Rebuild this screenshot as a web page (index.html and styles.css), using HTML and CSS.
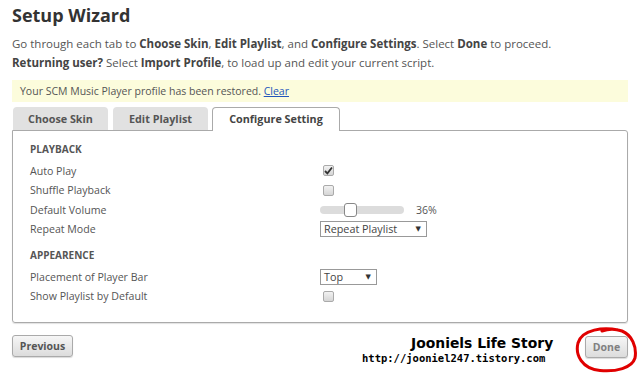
FILE: index.html
```html
<!DOCTYPE html>
<html>
<head>
<meta charset="utf-8">
<link rel="stylesheet" href="styles.css">
</head>
<body>
<div class="wizard">
  <h1 class="title">Setup Wizard</h1>
  <p class="intro">Go through each tab to <b>Choose Skin</b>, <b>Edit Playlist</b>, and <b>Configure Settings</b>. Select <b>Done</b> to proceed.<br><b>Returning user?</b> Select <b>Import Profile</b>, to load up and edit your current script.</p>
  <div class="notice">Your SCM Music Player profile has been restored. <a class="link" href="#">Clear</a></div>
  <div class="tabs">
    <div class="tab t1">Choose Skin</div>
    <div class="tab t2">Edit Playlist</div>
    <div class="tab active">Configure Setting</div>
  </div>
  <div class="panel">
    <div class="heading">PLAYBACK</div>
    <div class="row"><span class="label">Auto Play</span><span class="ctrl"><span class="check"><svg width="9" height="9" viewBox="0 0 9 9"><path d="M1 5 L3.4 7.4 L8 1.5" fill="none" stroke="#333" stroke-width="1.8"/></svg></span></span></div>
    <div class="row"><span class="label">Shuffle Playback</span><span class="ctrl"><span class="check"></span></span></div>
    <div class="row"><span class="label">Default Volume</span><span class="ctrl"><span class="slider"><span class="track"></span><span class="handle"></span></span><span class="pct">36%</span></span></div>
    <div class="row"><span class="label">Repeat Mode</span><span class="ctrl"><span class="select wide">Repeat Playlist<span class="arrow">▼</span></span></span></div>
    <div class="heading second">APPEARENCE</div>
    <div class="row"><span class="label">Placement of Player Bar</span><span class="ctrl"><span class="select narrow">Top<span class="arrow">▼</span></span></span></div>
    <div class="row"><span class="label">Show Playlist by Default</span><span class="ctrl"><span class="check"></span></span></div>
  </div>
  <div class="footer">
    <button class="btn">Previous</button>
    <button class="btn done">Done</button>
  </div>
</div>
<div class="wm1">Jooniels Life Story</div>
<div class="wm2">http://jooniel247.tistory.com</div>
<svg class="circle" width="66" height="50" viewBox="0 0 66 50"><path d="M44 5 C30 2 8 4 4 18 C1 30 8 44 26 45.5 C42 47 58 43 61 33 C63 22 58 10 48 6 C42 4 34 4 28 6" fill="none" stroke="#e00000" stroke-width="3" stroke-linecap="round"/></svg>
</body>
</html>
```
FILE: styles.css
```css
html, body { margin: 0; padding: 0; background: #fff; }
body { font-family: "Open Sans", "DejaVu Sans", sans-serif; color: #555; width: 640px; height: 375px; overflow: hidden; position: relative; }
.wizard { padding: 0 12px 0 12px; }
.title { margin: 0; font-size: 18px; line-height: 30px; font-weight: 700; color: #333; }
.intro { margin: 4px 0 0 0; font-size: 11.5px; line-height: 19px; color: #555; }
.intro b { color: #444; }
.notice { margin-top: 8px; height: 22px; line-height: 22px; background: #fcfcdc; padding-left: 8px; font-size: 10.5px; color: #555; }
.link { color: #2255bb; text-decoration: underline; }
.tabs { display: flex; margin-top: 5px; padding-left: 1px; height: 23px; position: relative; z-index: 1; }
.tab { height: 23px; line-height: 23px; box-sizing: border-box; background: #e1e1e1; border-radius: 4px 4px 0 0; font-size: 10.8px; font-weight: 700; color: #555; text-align: center; }
.t1 { width: 95px; margin-right: 5px; }
.t2 { width: 95px; margin-right: 4px; }
.tab.active { width: 128px; background: #fff; border: 1px solid #aaa; border-bottom: none; height: 24px; line-height: 22px; color: #444; }
.panel { border: 1px solid #aaa; border-radius: 0 3px 3px 3px; padding: 9px 0 16px 17px; box-shadow: 0 1px 1px rgba(0,0,0,0.12); }
.heading { font-size: 10px; font-weight: 700; line-height: 18px; color: #555; margin-bottom: 3px; }
.heading.second { margin-top: 7px; }
.row { display: grid; grid-template-columns: 291px auto; height: 19.5px; align-items: center; font-size: 10.6px; }
.ctrl { display: flex; align-items: center; }
.check { width: 11px; height: 11px; box-sizing: border-box; border: 1px solid #aaa; border-radius: 2px; background: linear-gradient(#f2f2f2, #d5d5d5); margin-left: 2px; display: flex; align-items: center; justify-content: center; }
.slider { position: relative; width: 84px; height: 14px; display: flex; align-items: center; margin-left: -1px; }
.track { width: 84px; height: 8px; background: #dcdcdc; border-radius: 4px; }
.handle { position: absolute; left: 24px; top: 0; width: 13px; height: 14px; box-sizing: border-box; background: #fff; border: 1px solid #888; border-radius: 3px; }
.pct { margin-left: 12px; font-size: 10.6px; color: #555; }
.select { position: relative; height: 16px; box-sizing: border-box; border: 1px solid #999; line-height: 14px; padding-left: 3px; font-size: 10.8px; color: #444; background: #fff; margin-left: -1px; }
.wide { width: 107px; }
.narrow { width: 57px; }
.arrow { position: absolute; right: 5px; top: 0; font-size: 7px; color: #333; }
.footer { display: flex; justify-content: space-between; margin-top: 12px; }
.btn { font-family: "Open Sans", "DejaVu Sans", sans-serif; font-size: 10.5px; font-weight: 700; color: #555; height: 22px; width: 61px; padding: 0; border: 1px solid #aaa; border-radius: 3px; background: linear-gradient(#f6f6f6, #dcdcdc); box-shadow: 0 1px 1px rgba(0,0,0,0.15); }
.btn.done { color: #808080; margin-top: 1px; width: 43px; }
.wm1 { position: absolute; left: 411px; top: 334px; font-family: "DejaVu Sans", sans-serif; font-weight: 700; font-size: 13.9px; line-height: 18px; color: #000; white-space: nowrap; }
.wm2 { position: absolute; left: 362px; top: 352px; font-family: "DejaVu Sans Mono", monospace; font-weight: 700; font-size: 10.5px; line-height: 12px; color: #000; white-space: nowrap; }
.circle { position: absolute; left: 574px; top: 325px; }
```
